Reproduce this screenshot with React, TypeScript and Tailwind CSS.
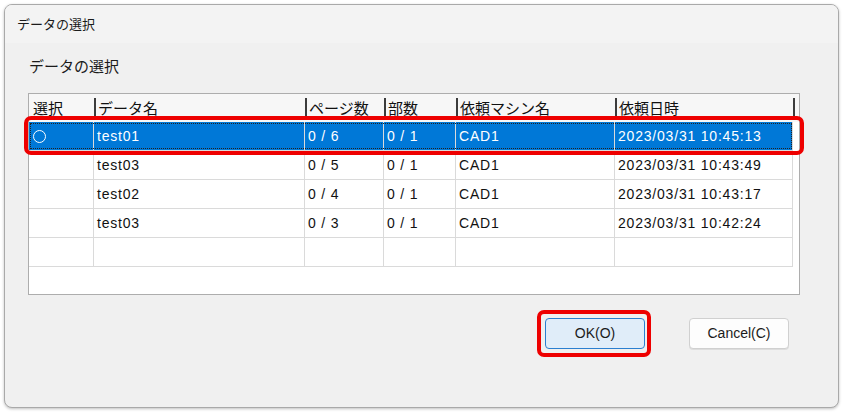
import React from 'react';

interface Row {
  name: string;
  pages: string;
  copies: string;
  machine: string;
  date: string;
}

const rows: Row[] = [
  { name: 'test01', pages: '0 / 6', copies: '0 / 1', machine: 'CAD1', date: '2023/03/31 10:45:13' },
  { name: 'test03', pages: '0 / 5', copies: '0 / 1', machine: 'CAD1', date: '2023/03/31 10:43:49' },
  { name: 'test02', pages: '0 / 4', copies: '0 / 1', machine: 'CAD1', date: '2023/03/31 10:43:17' },
  { name: 'test03', pages: '0 / 3', copies: '0 / 1', machine: 'CAD1', date: '2023/03/31 10:42:24' },
];

const headers = [
  { label: '選択', w: 'w-[65px]', first: true },
  { label: 'データ名', w: 'w-[211px]' },
  { label: 'ページ数', w: 'w-[79px]' },
  { label: '部数', w: 'w-[72px]' },
  { label: '依頼マシン名', w: 'w-[159px]' },
  { label: '依頼日時', w: 'w-[178px]' },
];

const jp = { fontFamily: '"Noto Sans CJK JP", "Noto Sans", sans-serif' };
const data = { fontFamily: '"Liberation Sans", Arial, sans-serif' };

function BodyRow({ row, selected }: { row?: Row; selected?: boolean }) {
  const cell = 'h-full flex items-center pl-[3px] border-r border-[#dadada]';
  return (
    <div
      className={`relative flex h-[29px] border-b border-[#dadada] text-[14px] tracking-[0.8px] ${
        selected ? 'bg-[#0078d7] text-white' : 'bg-white text-[#111]'
      }`}
      style={data}
    >
      {selected && (
        <div className="absolute inset-[1px] border border-dotted border-[#222] pointer-events-none" />
      )}
      <div className={`${cell} w-[65px] pl-[4px]`}>
        {selected && <div className="w-[13px] h-[13px] rounded-full border border-white" />}
      </div>
      <div className={`${cell} w-[211px]`}>{row?.name}</div>
      <div className={`${cell} w-[79px]`}>{row?.pages}</div>
      <div className={`${cell} w-[72px]`}>{row?.copies}</div>
      <div className={`${cell} w-[159px]`}>{row?.machine}</div>
      <div className={`${cell} w-[178px]`}>{row?.date}</div>
    </div>
  );
}

export default function App() {
  return (
    <div className="w-[843px] h-[412px] bg-white pt-[4px] pl-[4px]">
      <div className="relative w-[835px] h-[404px] rounded-[8px] border border-[#a9a9a9] bg-[#f0f0f0] overflow-hidden shadow-[0_1px_3px_rgba(0,0,0,0.25)] flex flex-col">
        {/* タイトルバー */}
        <div className="h-[38px] bg-[#f3f3f3] flex items-center pl-[12px] text-[13px] text-[#1b1b1b]" style={jp}>
          データの選択
        </div>

        <div className="flex-1 flex flex-col pl-[23px]">
          <div className="h-[50px] flex items-center pl-[1px] pb-[4px] text-[15px] text-[#1b1b1b]" style={jp}>
            データの選択
          </div>

          {/* リスト */}
          <div className="w-[772px] h-[202px] border border-[#adadad] bg-white">
            <div className="flex h-[28px] bg-[#f7f7f7] text-[15px] text-[#111]" style={jp}>
              {headers.map((h) => (
                <div key={h.label} className={`${h.w} h-full flex items-center`}>
                  {!h.first && <div className="w-[2px] h-[21px] bg-[#3c3c3c] mr-[2px]" />}
                  <span className={h.first ? 'pl-[4px]' : ''}>{h.label}</span>
                </div>
              ))}
              <div className="h-full flex items-center">
                <div className="w-[2px] h-[21px] bg-[#3c3c3c]" />
              </div>
            </div>
            <div className="w-[764px]">
              {rows.map((r, i) => (
                <BodyRow key={i} row={r} selected={i === 0} />
              ))}
              <BodyRow />
            </div>
          </div>

          {/* ボタン */}
          <div className="flex justify-end items-center pr-[49px] mt-[15px]">
            <div className="rounded-[7px] border-[4px] border-[#ee0000] pl-[4px] pr-[2px] py-[4px]">
              <button
                className="w-[100px] h-[31px] rounded-[4px] border border-[#2a7fd0] bg-[#e0edf9] text-[14px] text-[#1b1b1b]"
                style={data}
              >
                OK(O)
              </button>
            </div>
            <button
              className="ml-[38px] w-[100px] h-[31px] rounded-[4px] border border-[#d0d0d0] bg-[#fdfdfd] text-[14px] text-[#1b1b1b] shadow-[0_1px_0_rgba(0,0,0,0.08)]"
              style={data}
            >
              Cancel(C)
            </button>
          </div>
        </div>

        {/* 選択行の赤枠 */}
        <div className="absolute left-[19px] top-[111px] w-[780px] h-[39px] rounded-[7px] border-[4px] border-[#ee0000] pointer-events-none" />
      </div>
    </div>
  );
}
